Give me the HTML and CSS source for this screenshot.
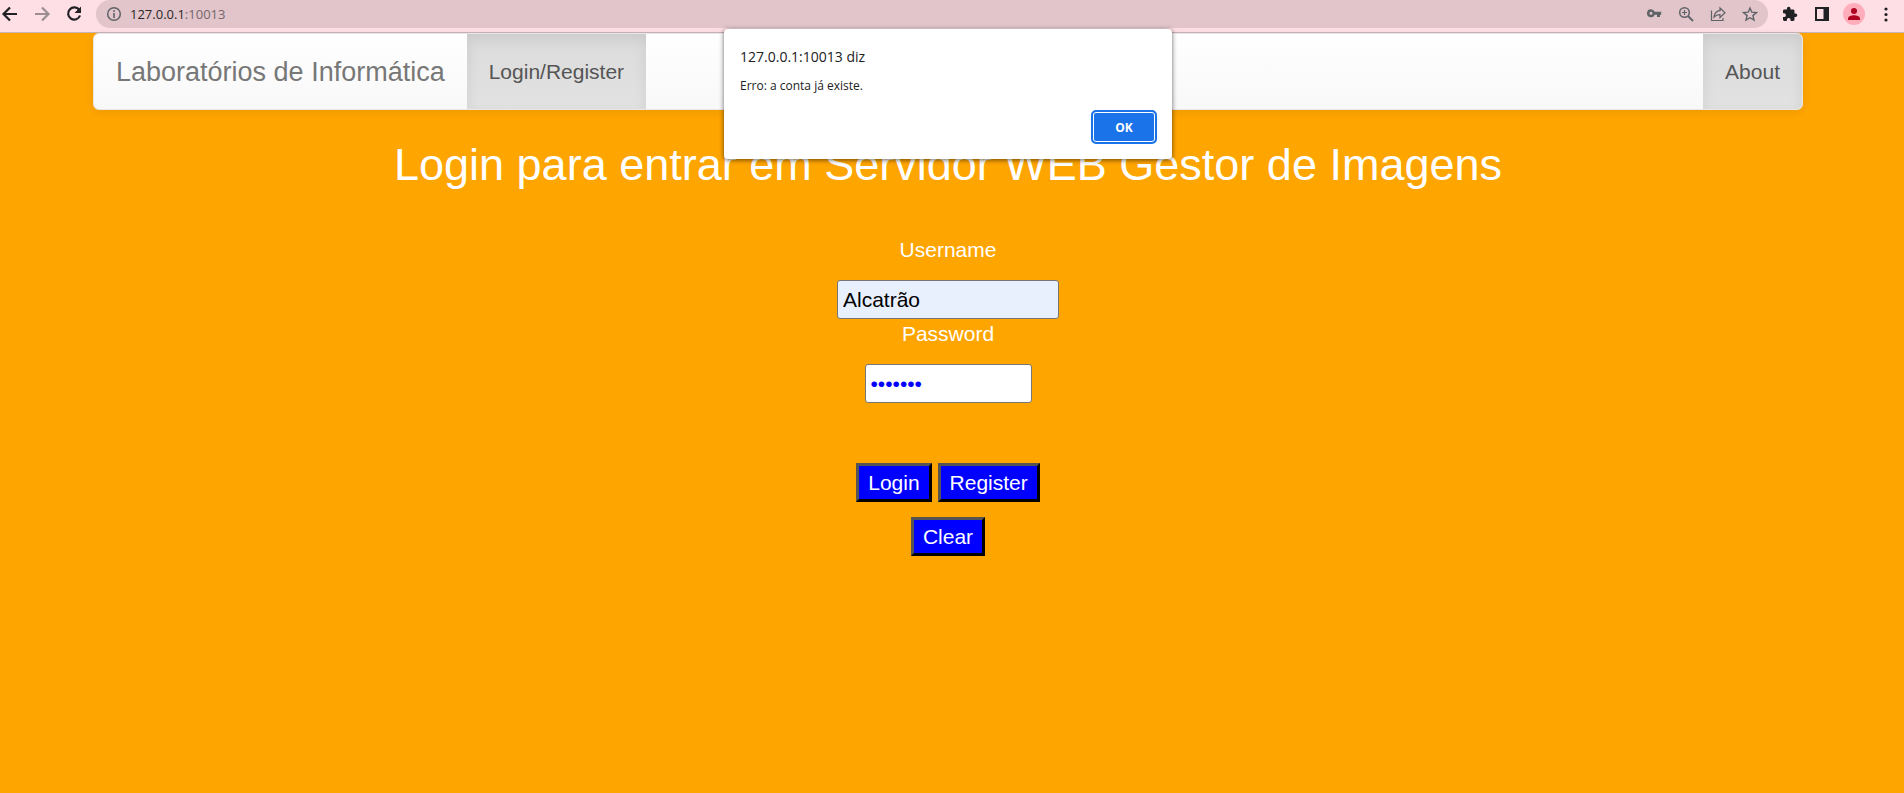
FILE: index.html
```html
<!DOCTYPE html>
<html lang="pt">
<head>
<meta charset="utf-8">
<meta name="viewport" content="width=device-width, initial-scale=1">
<title>Laboratórios de Informática</title>
<link rel="stylesheet" href="styles.css">
</head>
<body>
<div class="toolbar">
  <div class="tools tools-nav">
    <button class="icon-btn" aria-label="Voltar"><svg class="icon" viewBox="0 0 20 20"><path d="M17 10H4M10 3.500L3.500 10l6.500 6.500" fill="none" stroke="#202124" stroke-width="2.200"/></svg></button>
    <button class="icon-btn" aria-label="Avançar"><svg class="icon" viewBox="0 0 20 20"><path d="M3 10h13M10 3.500L16.500 10 10 16.500" fill="none" stroke="#9b8e93" stroke-width="2.200"/></svg></button>
    <button class="icon-btn" aria-label="Recarregar"><svg class="icon" viewBox="0 0 20 20"><path d="M15.200 6A6.100 6.100 0 1 0 16 11.500" fill="none" stroke="#202124" stroke-width="2.200"/><path d="M17 2.500V9h-6.500z" fill="#202124"/></svg></button>
  </div>
  <div class="address">
    <svg class="icon-info" viewBox="0 0 16 16"><circle cx="8" cy="8" r="6.300" fill="none" stroke="#5f6368" stroke-width="1.500"/><path d="M8 4.300v1.600M8 7v5" stroke="#5f6368" stroke-width="1.600"/></svg>
    <span class="url">127.0.0.1<span class="port">:10013</span></span>
    <div class="tools tools-page">
      <button class="icon-btn icon-cell" aria-label="Palavras-passe"><svg class="icon-page" viewBox="0 0 16 16"><path fill="#5f6368" fill-rule="evenodd" d="M5 3.300a4 4 0 1 0 3.700 5.400h2.300v2.300h3V8.700h1.200V5.800H8.700A4 4 0 0 0 5 3.300zM5 5.800a1.500 1.500 0 1 1 0 3 1.500 1.500 0 0 1 0-3z"/></svg></button>
      <button class="icon-btn icon-cell" aria-label="Zoom"><svg class="icon-page" viewBox="0 0 16 16"><g fill="none" stroke="#5f6368"><circle cx="6.500" cy="6.500" r="4.800" stroke-width="1.500"/><path d="M10 10l5 5" stroke-width="1.800"/><path d="M6.500 4v5M4 6.500h5" stroke-width="1.200"/></g></svg></button>
      <button class="icon-btn icon-cell" aria-label="Partilhar"><svg class="icon-page" viewBox="0 0 16 16"><g fill="none" stroke="#5f6368" stroke-width="1.200"><path d="M1.500 4.500v10h11.500V12"/><path d="M4 11c.5-4 2.700-6 6-6.300V2l5 4.800-5 4.700V8.700C7.500 8.600 5.500 9.300 4 11z"/></g></svg></button>
      <button class="icon-btn icon-cell" aria-label="Favoritos"><svg class="icon-page" viewBox="0 0 16 16"><path d="M8 2l1.800 4.200 4.600.4-3.500 3 1.100 4.500L8 11.700l-4 2.400 1.100-4.500-3.500-3 4.600-.4z" fill="none" stroke="#5f6368" stroke-width="1.400"/></svg></button>
    </div>
  </div>
  <div class="tools tools-browser">
    <button class="icon-btn icon-cell" aria-label="Extensões"><svg class="icon-page" viewBox="0 0 16 16"><path fill="#202124" d="M13.500 7.500h-1V5c0-.8-.6-1.400-1.400-1.400H8.500V2.500a1.800 1.800 0 0 0-3.600 0v1.100H2.400C1.600 3.600 1 4.200 1 5v2.300h1a1.900 1.900 0 0 1 0 3.800H1v2.500c0 .8.600 1.400 1.400 1.400h2.400v-1a1.900 1.900 0 0 1 3.800 0v1h2.500c.8 0 1.400-.6 1.400-1.400v-2.500h1a1.800 1.800 0 0 0 0-3.600z"/></svg></button>
    <button class="icon-btn icon-cell" aria-label="Painel lateral"><svg class="icon-page" viewBox="0 0 16 16"><path fill="#202124" fill-rule="evenodd" d="M1 1h14v14H1zM3 3v10h6.500V3z"/></svg></button>
    <button class="icon-btn icon-cell" aria-label="Perfil"><svg class="icon-profile" viewBox="0 0 22 22"><circle cx="11" cy="11" r="11" fill="#ffacbb"/><circle cx="11" cy="8" r="3" fill="#b00020"/><path d="M5 17v-1.500c0-2 3.500-3.200 6-3.200s6 1.200 6 3.200V17z" fill="#b00020"/></svg></button>
    <button class="icon-btn icon-cell" aria-label="Menu"><svg class="icon-page" viewBox="0 0 16 16"><g fill="#202124"><circle cx="8" cy="3" r="1.600"/><circle cx="8" cy="8.500" r="1.600"/><circle cx="8" cy="14" r="1.600"/></g></svg></button>
  </div>
</div>

<div class="page">
  <nav class="navbar">
    <a class="brand" href="#">Laboratórios de Informática</a>
    <a class="nav-link" href="#">Login/Register</a>
    <a class="nav-link nav-end" href="#">About</a>
  </nav>
  <main class="content">
    <h2 class="title">Login para entrar em Servidor WEB Gestor de Imagens</h2>
    <form class="form">
      <label class="label" for="username">Username</label>
      <input class="field field-user" id="username" type="text" value="Alcatrão">
      <label class="label" for="password">Password</label>
      <input class="field field-pass" id="password" type="password" value="segredo">
      <div class="actions">
        <button class="btn" type="button">Login</button>
        <button class="btn" type="button">Register</button>
      </div>
      <button class="btn" type="reset">Clear</button>
    </form>
  </main>
</div>

<div class="dialog" role="alertdialog" aria-labelledby="dialog-title" aria-describedby="dialog-text">
  <p class="dialog-title" id="dialog-title">127.0.0.1:10013 diz</p>
  <p class="dialog-text" id="dialog-text">Erro: a conta já existe.</p>
  <button class="dialog-ok" type="button">OK</button>
</div>
</body>
</html>
```
FILE: styles.css
```css
* { box-sizing: border-box; }

body {
  margin: 0;
  min-height: 100vh;
  background: #ffa500;
  font-family: "Liberation Sans", Arial, sans-serif;
  font-size: 21px;
  line-height: 30px;
  color: #fff;
}

/* Browser toolbar */
.toolbar {
  display: flex;
  height: 33px;
  padding-bottom: 4px;
  border-bottom: 1px solid #c9b3b9;
  background: #ffdfe6;
  font-family: "Open Sans", "Noto Sans", sans-serif;
}

.tools { display: flex; align-items: center; }
.tools-nav { gap: 12px; width: 96px; }
.tools-page { margin-left: auto; }
.tools-browser { padding: 0 2px 0 6px; }

.icon-btn { display: flex; justify-content: center; padding: 0; border: 0; background: none; }
.icon-cell { width: 32px; }
.icon { width: 20px; height: 20px; }
.icon-page, .icon-info { width: 16px; height: 16px; }
.icon-profile { width: 22px; height: 22px; }

.address {
  display: flex;
  flex: 1;
  align-items: center;
  gap: 8px;
  padding: 0 2px 0 10px;
  border-radius: 14px;
  background: #e1c5ca;
}

.url { font-size: 13px; line-height: 20px; color: #2b2729; }
.port { color: #75676c; }

/* Page */
.page { padding-right: 8px; }

.navbar {
  display: flex;
  max-width: 1710px;
  margin: 0 auto;
  border: 1px solid #e7e7e7;
  border-radius: 6px;
  overflow: hidden;
  background: linear-gradient(#fff, #f8f8f8);
  box-shadow: 0 2px 8px rgba(0, 0, 0, 0.08);
}

.brand, .nav-link { padding: 23px 22px 22px; text-decoration: none; }
.brand { font-size: 27px; color: #777; }

.nav-link {
  color: #555;
  background: linear-gradient(#dbdbdb, #e2e2e2);
  box-shadow: inset 0 5px 14px rgba(0, 0, 0, 0.08);
}

.nav-end { margin-left: auto; }

.content { text-align: center; }
.title { margin: 30px 0 45px; font-size: 45px; font-weight: 400; line-height: 50px; }

.form { display: flex; flex-direction: column; align-items: center; }
.label { margin-bottom: 15px; }

.field {
  height: 39px;
  padding: 0 5px;
  border: 1px solid #767676;
  border-radius: 3px;
  font: inherit;
}

.field-user { width: 222px; background: #e8f0fe; color: #000; }
.field-pass { width: 167px; background: #fff; color: #00f; }

.actions { display: flex; gap: 6px; margin: 60px 0 15px; }

.btn {
  height: 39px;
  padding: 0 9px;
  border: 3px outset #000;
  background: #00f;
  color: #fff;
  font: inherit;
}

/* Alert dialog */
.dialog {
  position: absolute;
  top: 29px;
  left: 50%;
  display: flex;
  flex-direction: column;
  width: 448px;
  margin-left: -228px;
  padding: 16px 15px 15px 16px;
  border-radius: 4px;
  background: #fff;
  box-shadow: 0 1px 5px rgba(0, 0, 0, 0.6);
  color: #202124;
  font-family: "Open Sans", "Noto Sans", sans-serif;
}

.dialog-title { margin: 0 0 9px; font-size: 14px; line-height: 24px; }
.dialog-text { margin: 0 0 16px; font-size: 12px; line-height: 16px; }

.dialog-ok {
  align-self: flex-end;
  width: 66px;
  height: 34px;
  border: 2px solid #1a73e8;
  border-radius: 5px;
  background: #1a73e8;
  box-shadow: inset 0 0 0 1px #fff;
  color: #fff;
  font: 700 12px "Open Sans", "Noto Sans", sans-serif;
}
```
